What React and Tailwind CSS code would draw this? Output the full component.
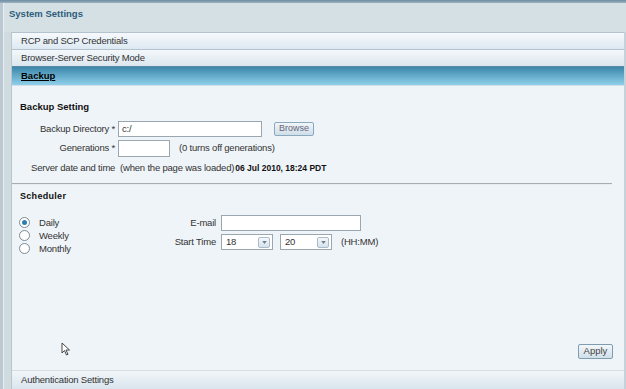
import React from "react";

const T = "text-[9.5px] tracking-[-0.2px] text-[#333]";

function Select({ value }) {
  return (
    <div className="flex items-center justify-between w-[52px] h-[16px] border border-[#9aa7b0] bg-white pl-[4px] pr-[2px]">
      <span className={`${T} leading-none`}>{value}</span>
      <div className="w-[12px] h-[11px] border border-[#a9bccb] rounded-[2px] bg-gradient-to-b from-[#f4f8fb] to-[#d6e2ea] flex items-center justify-center">
        <svg width="5" height="3" viewBox="0 0 6 4"><path d="M0 0 L6 0 L3 4 Z" fill="#6b7f8e" /></svg>
      </div>
    </div>
  );
}

function Radio({ checked, label }) {
  return (
    <div className="flex items-center gap-[9px] h-[13px]">
      <div className="w-[11px] h-[11px] rounded-full border border-[#7d8a94] bg-white flex items-center justify-center">
        {checked && <div className="w-[5px] h-[5px] rounded-full bg-[#2a7fb0]" />}
      </div>
      <span className={`${T} leading-none`}>{label}</span>
    </div>
  );
}

export default function App() {
  return (
    <div className="font-['Liberation_Sans',Arial,sans-serif] w-[626px] h-[389px] overflow-hidden bg-[#c9d5dc] relative">
      <div className="h-[3px] bg-gradient-to-b from-[#6f8da2] to-[#9bb1c0]" />
      <div className="flex h-[386px]">
        <div className="w-[3px] bg-[#b9c8d1]" />
        <div className="flex-1 flex flex-col border-l border-[#e8eef2] bg-[#d5e0e4]">
          <div className="h-[29px] pt-[5px] pl-[5px] text-[9.5px] leading-[12px] font-bold text-[#2d5d7c]">
            System Settings
          </div>
          <div className="flex flex-1">
            <div className="w-[8px] bg-[#d0dbe0] border-r border-[#b8c6ce]" />
            <div className="flex-1 flex flex-col">
              <div className={`h-[17px] border-t border-[#b3c2cc] bg-gradient-to-b from-[#f6f9fc] to-[#dde9f2] flex items-center pl-[9px] ${T}`}>
                RCP and SCP Credentials
              </div>
              <div className={`h-[17px] border-t border-[#b3c2cc] bg-gradient-to-b from-[#f4f8fb] to-[#dbe6ee] flex items-center pl-[9px] ${T}`}>
                Browser-Server Security Mode
              </div>
              <div className="h-[19px] border-t border-[#5c8aa4] bg-gradient-to-b from-[#3b87ab] to-[#8fd0ea] flex items-center pl-[9px] text-[9.5px] font-bold underline text-black">
                Backup
              </div>
              <div className="flex-1 bg-[#eff4f8] border-t border-[#d4e0e7] flex flex-col relative">
                <div className="pl-[8px] mt-[14px] h-[14px] leading-[14px] text-[9.5px] font-bold text-[#111]">Backup Setting</div>
                <div className="flex items-center mt-[7px] h-[16px]">
                  <div className={`w-[106px] text-right pr-[3px] whitespace-nowrap ${T}`}>Backup Directory *</div>
                  <div className={`w-[144px] h-[16px] border border-[#9aa7b0] bg-white pl-[3px] leading-[14px] ${T}`}>c:/</div>
                  <div className="ml-[12px] w-[40px] h-[14px] border border-[#8aa9bf] rounded-[2px] bg-gradient-to-b from-[#f1f6fa] to-[#cfdee9] text-[9px] text-[#667] flex items-center justify-center">Browse</div>
                </div>
                <div className="flex items-center mt-[3px] h-[17px]">
                  <div className={`w-[106px] text-right pr-[3px] whitespace-nowrap ${T}`}>Generations *</div>
                  <div className="w-[52px] h-[17px] border border-[#9aa7b0] bg-white" />
                  <div className={`ml-[9px] whitespace-nowrap ${T}`}>(0 turns off generations)</div>
                </div>
                <div className={`flex items-center mt-[4px] pl-[19px] h-[14px] whitespace-nowrap ${T}`}>
                  <span>Server date and time&nbsp;&nbsp;(when the page was loaded)</span>
                  <span className="font-bold text-[8.5px] tracking-normal text-[#111] ml-[1px]">06 Jul 2010, 18:24 PDT</span>
                </div>
                <div className="mt-[8px] mr-[12px] h-[2px] bg-[#a7adb2] border-b border-[#e6ecf0]" />
                <div className="pl-[8px] mt-[4px] h-[14px] leading-[14px] text-[9px] font-bold text-[#111] tracking-[0.3px]">Scheduler</div>
                <div className="flex mt-[12px]">
                  <div className="pl-[7px] w-[152px] flex flex-col pt-[1px]">
                    <Radio checked label="Daily" />
                    <Radio label="Weekly" />
                    <Radio label="Monthly" />
                  </div>
                  <div className="flex flex-col gap-[3px]">
                    <div className="flex items-center h-[16px]">
                      <div className={`w-[57px] text-right pr-[5px] whitespace-nowrap ${T}`}>E-mail</div>
                      <div className="w-[140px] h-[16px] border border-[#9aa7b0] bg-white" />
                    </div>
                    <div className="flex items-center h-[16px]">
                      <div className={`w-[57px] text-right pr-[5px] whitespace-nowrap ${T}`}>Start Time</div>
                      <Select value="18" />
                      <div className="w-[7px]" />
                      <Select value="20" />
                      <div className={`ml-[9px] whitespace-nowrap ${T}`}>(HH:MM)</div>
                    </div>
                  </div>
                </div>
                <div className="flex-1" />
                <div className="flex justify-end pr-[11px] pb-[11px]">
                  <div className="w-[35px] h-[15px] border border-[#7e9cb2] rounded-[2px] bg-gradient-to-b from-[#f3f7fa] to-[#d1dfe9] text-[9.5px] text-[#444] flex items-center justify-center">Apply</div>
                </div>
                <svg className="absolute left-[49px] top-[256px]" width="10" height="14" viewBox="0 0 10 14">
                  <path d="M1 1 L1 11 L3.5 8.5 L5.5 13 L7 12.3 L5 8 L8.5 8 Z" fill="#fff" stroke="#333" strokeWidth="0.9" />
                </svg>
              </div>
              <div className={`h-[19px] border-t border-[#d7dee3] bg-gradient-to-b from-[#f2f6f9] to-[#d9e5ee] flex items-center pl-[9px] ${T}`}>
                Authentication Settings
              </div>
            </div>
            <div className="w-[2px] bg-[#c5d2da]" />
          </div>
        </div>
      </div>
    </div>
  );
}
